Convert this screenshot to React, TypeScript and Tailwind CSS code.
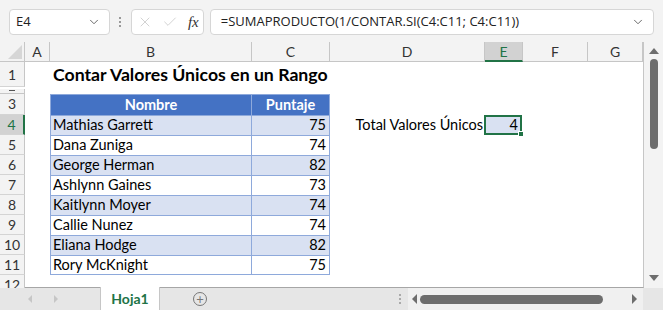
import { ChevronDown, X, Check } from "lucide-react";

const cols = [
  { k: "A", w: "w-[25px]" },
  { k: "B", w: "w-[202px]" },
  { k: "C", w: "w-[78px]" },
  { k: "D", w: "w-[155px]" },
  { k: "E", w: "w-[38px]" },
  { k: "F", w: "w-[65px]" },
  { k: "G", w: "w-[55px]" },
];

const data: [string, number][] = [
  ["Mathias Garrett", 75],
  ["Dana Zuniga", 74],
  ["George Herman", 82],
  ["Ashlynn Gaines", 73],
  ["Kaitlynn Moyer", 74],
  ["Callie Nunez", 74],
  ["Eliana Hodge", 82],
  ["Rory McKnight", 75],
];

function RowHead({ n, h, active }: { n: number; h: string; active?: boolean }) {
  return (
    <div
      className={`w-[25px] ${h} shrink-0 flex items-center justify-center overflow-hidden border-b border-[#d4d4d4] text-[14px] ${
        active ? "bg-[#d2d2d2] border-r-2 border-r-[#217346] text-[#217346]" : "bg-[#f3f3f3] border-r border-r-[#c6c6c6] text-[#333]"
      }`}
    >
      {n}
    </div>
  );
}

export default function App() {
  return (
    <div className="w-[663px] h-[310px] bg-[#f3f3f3] overflow-hidden font-['Lato',sans-serif] text-black flex flex-col">
      {/* formula bar */}
      <div className="h-[42px] flex items-start pt-[9px] px-[9px] gap-0 font-['Open_Sans',sans-serif]">
        <div className="w-[101px] h-[26px] bg-white border border-[#d6d6d6] rounded-[4px] flex items-center justify-between pl-[6px] pr-[8px] text-[13px] text-[#222]">
          <span>E4</span>
          <ChevronDown size={14} strokeWidth={1.5} className="text-[#555]" />
        </div>
        <div className="w-[21px] h-[26px] flex flex-col items-center justify-center gap-[2px]">
          <span className="w-[2px] h-[2px] bg-[#999]" />
          <span className="w-[2px] h-[2px] bg-[#999]" />
          <span className="w-[2px] h-[2px] bg-[#999]" />
        </div>
        <div className="w-[73px] h-[26px] bg-white border border-[#d6d6d6] rounded-[4px] flex items-center justify-between pl-[5px] pr-[4px]">
          <X size={16} strokeWidth={1} className="text-[#bbb]" />
          <Check size={16} strokeWidth={1} className="text-[#bbb]" />
          <span className="font-['Liberation_Serif',serif] italic text-[15px] text-[#333]">fx</span>
        </div>
        <div className="ml-[6px] w-[445px] h-[26px] bg-white border border-[#d6d6d6] rounded-[4px] flex items-center justify-between pl-[10px] pr-[8px] text-[13px] text-[#222]">
          <span>=SUMAPRODUCTO(1/CONTAR.SI(C4:C11; C4:C11))</span>
          <ChevronDown size={14} strokeWidth={1.5} className="text-[#555]" />
        </div>
      </div>

      {/* grid + vertical scroll */}
      <div className="flex h-[246px]">
        <div className="w-[644px] flex flex-col bg-white border-r border-[#c6c6c6] border-b border-b-[#a6a6a6]">
          {/* column headers */}
          <div className="flex h-[20px] bg-[#f3f3f3] text-[14px] text-[#333]">
            <div className="w-[25px] shrink-0 border-r border-b border-[#c6c6c6] relative">
              <div className="absolute right-[2px] bottom-[2px] w-0 h-0 border-l-[14px] border-l-transparent border-b-[14px] border-b-[#d6d6d6]" />
            </div>
            {cols.map((c) =>
              c.k === "E" ? (
                <div key={c.k} className={`${c.w} shrink-0 flex items-center justify-center bg-[#d2d2d2] border-r border-[#c6c6c6] border-b-2 border-b-[#217346] text-[#217346]`}>
                  {c.k}
                </div>
              ) : (
                <div key={c.k} className={`${c.w} shrink-0 flex items-center justify-center border-r border-b border-[#c6c6c6]`}>
                  {c.k}
                </div>
              )
            )}
          </div>

          {/* row 1 */}
          <div className="flex">
            <RowHead n={1} h="h-[25px]" />
            <div className="pl-[28px] flex items-center text-[17.7px] font-bold">Contar Valores Únicos en un Rango</div>
          </div>
          {/* row 2 */}
          <div className="flex">
            <div className="w-[25px] h-[5px] shrink-0 bg-[#f3f3f3] border-r border-b border-[#c6c6c6] flex justify-center">
              <span className="w-[6px] h-[1px] mt-[1px] bg-[#555]" />
            </div>
          </div>
          {/* row 3 */}
          <div className="flex">
            <RowHead n={3} h="h-[21px]" />
            <div className="w-[25px]" />
            <div className="flex h-[21px] bg-[#4472c4] text-white font-bold text-[14.5px] border border-[#8ea9db] border-b-0">
              <div className="w-[201px] flex items-center justify-center border-r border-[#8ea9db]">Nombre</div>
              <div className="w-[77px] flex items-center justify-center">Puntaje</div>
            </div>
          </div>
          {data.map(([name, score], i) => (
            <div key={name} className="flex">
              <RowHead n={i + 4} h="h-[20px]" active={i === 0} />
              <div className="w-[25px]" />
              <div
                className={`flex h-[20px] text-[14.5px] border-l border-r border-t border-[#8ea9db] ${i === 7 ? "border-b" : ""} ${
                  i % 2 === 0 ? "bg-[#d9e1f2]" : "bg-white"
                }`}
              >
                <div className="w-[201px] flex items-center pl-[2px] border-r border-[#8ea9db]">{name}</div>
                <div className="w-[77px] flex items-center justify-end pr-[3px]">{score}</div>
              </div>
              {i === 0 && (
                <div className="flex h-[20px] text-[14.5px]">
                  <div className="w-[155px] flex items-center justify-end pr-[2px]">Total Valores Únicos</div>
                  <div className="w-[38px] h-[20px] relative border-2 border-[#217346] bg-[#d9e1f2] flex items-center justify-end pr-[2px] -ml-[1px]">
                    4
                    <div className="absolute -right-[4px] -bottom-[4px] w-[6px] h-[6px] bg-[#217346] border border-white" />
                  </div>
                </div>
              )}
            </div>
          ))}
          {/* row 12 */}
          <div className="flex flex-1">
            <RowHead n={12} h="h-[20px]" />
          </div>
        </div>

        {/* vertical scrollbar */}
        <div className="flex-1 bg-[#f3f3f3] flex flex-col items-center pt-[6px] pb-[2px]">
          <div className="w-0 h-0 border-l-[5px] border-r-[5px] border-b-[6px] border-l-transparent border-r-transparent border-b-[#6d6d6d]" />
          <div className="mt-[5px] w-[8px] h-[90px] rounded-full bg-[#6d6d6d]" />
          <div className="flex-1" />
          <div className="w-0 h-0 border-l-[5px] border-r-[5px] border-t-[6px] border-l-transparent border-r-transparent border-t-[#6d6d6d] mb-[5px]" />
        </div>
      </div>

      {/* sheet tabs */}
      <div className="flex h-[22px] items-stretch bg-[#e6e6e6]">
        <div className="w-[100px] flex items-center gap-[22px] pl-[28px]">
          <div className="w-0 h-0 border-t-[4px] border-b-[4px] border-r-[4px] border-t-transparent border-b-transparent border-r-[#c6c6c6]" />
          <div className="w-0 h-0 border-t-[4px] border-b-[4px] border-l-[4px] border-t-transparent border-b-transparent border-l-[#c6c6c6]" />
        </div>
        <div className="w-[60px] bg-white border-x border-[#c6c6c6] flex items-center justify-center text-[#217346] font-bold text-[14px] -mt-[1px]">
          Hoja1
        </div>
        <div className="w-[80px] flex items-center justify-center">
          <div className="w-[14px] h-[14px] rounded-full border border-[#777] flex items-center justify-center text-[#777] text-[13px] leading-none">+</div>
        </div>
        <div className="w-[155px]" />
        <div className="w-[10px] flex flex-col items-center justify-center gap-[2px]">
          <span className="w-[2px] h-[2px] bg-[#aaa]" />
          <span className="w-[2px] h-[2px] bg-[#aaa]" />
          <span className="w-[2px] h-[2px] bg-[#aaa]" />
        </div>
        <div className="w-[235px] bg-[#f0f0f0] flex items-center pl-[4px] gap-[3px] ml-[3px]">
          <div className="w-0 h-0 border-t-[5px] border-b-[5px] border-r-[5px] border-t-transparent border-b-transparent border-r-[#6d6d6d]" />
          <div className="w-[183px] h-[9px] rounded-full bg-[#6d6d6d]" />
          <div className="flex-1" />
          <div className="w-0 h-0 border-t-[5px] border-b-[5px] border-l-[5px] border-t-transparent border-b-transparent border-l-[#6d6d6d] mr-[6px]" />
        </div>
      </div>
    </div>
  );
}
